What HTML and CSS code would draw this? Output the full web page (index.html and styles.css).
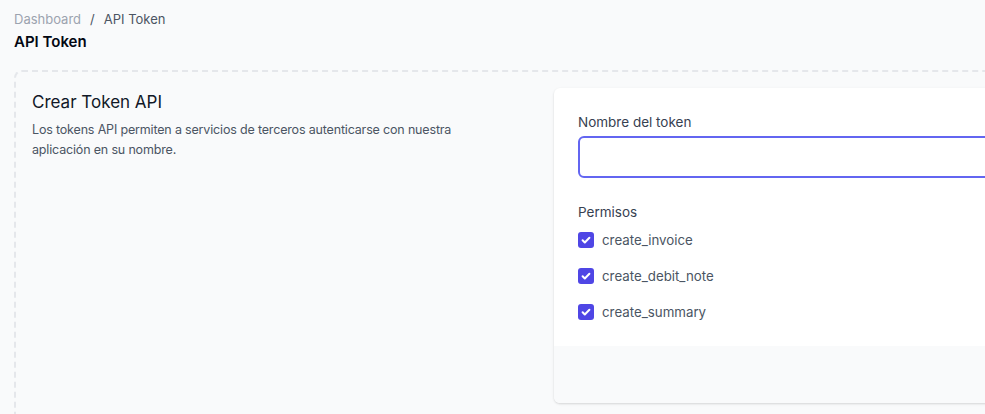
FILE: index.html
```html
<!DOCTYPE html>
<html lang="es">
<head>
<meta charset="utf-8">
<title>API Token</title>
<link rel="stylesheet" href="styles.css">
</head>
<body>
<div class="page">
  <header class="header">
    <nav class="crumbs">
      <span class="crumb-muted">Dashboard</span>
      <span class="crumb-sep">/</span>
      <span class="crumb-current">API Token</span>
    </nav>
    <h1 class="title">API Token</h1>
  </header>
  <section class="dashed">
    <div class="form-section">
      <div class="intro">
        <h2 class="intro-title">Crear Token API</h2>
        <p class="intro-text">Los tokens API permiten a servicios de terceros autenticarse con nuestra aplicación en su nombre.</p>
      </div>
      <div class="card">
        <div class="card-body">
          <label class="field-label" for="tname">Nombre del token</label>
          <input id="tname" class="text-input" type="text">
          <div class="perms">
            <div class="field-label">Permisos</div>
            <div class="perm-list">
              <label class="perm"><span class="check"><svg viewBox="0 0 16 16" width="16" height="16"><path d="M4.6 8.3l2.2 2.2 4.6-4.7" fill="none" stroke="#fff" stroke-width="2" stroke-linecap="round" stroke-linejoin="round"/></svg></span><span class="perm-text">create_invoice</span></label>
              <label class="perm"><span class="check"><svg viewBox="0 0 16 16" width="16" height="16"><path d="M4.6 8.3l2.2 2.2 4.6-4.7" fill="none" stroke="#fff" stroke-width="2" stroke-linecap="round" stroke-linejoin="round"/></svg></span><span class="perm-text">create_debit_note</span></label>
              <label class="perm"><span class="check"><svg viewBox="0 0 16 16" width="16" height="16"><path d="M4.6 8.3l2.2 2.2 4.6-4.7" fill="none" stroke="#fff" stroke-width="2" stroke-linecap="round" stroke-linejoin="round"/></svg></span><span class="perm-text">create_summary</span></label>
            </div>
          </div>
        </div>
        <div class="card-footer"></div>
      </div>
    </div>
  </section>
</div>
</body>
</html>
```
FILE: styles.css
```css
html, body {
  margin: 0;
  padding: 0;
  overflow: hidden;
  background: #f9fafb;
}
body {
  font-family: Inter, "Noto Sans", sans-serif;
  color: #111827;
}
.page {
  width: 1600px;
  padding: 0 14px;
}
.header {
  padding-top: 9px;
}
.crumbs {
  display: flex;
  gap: 9px;
  font-size: 13px;
  line-height: 20px;
}
.crumb-muted { color: #9ca3af; }
.crumb-sep { color: #4b5563; }
.crumb-current { color: #4b5563; }
.title {
  margin: 3px 0 0;
  font-size: 15px;
  line-height: 20px;
  font-weight: 600;
  color: #030712;
}
.dashed {
  margin-top: 18px;
  border: 2px dashed #e5e7eb;
  border-radius: 8px;
  padding: 16px;
  height: 400px;
}
.form-section {
  display: grid;
  grid-template-columns: 498px 1fr;
  gap: 24px;
}
.intro-title {
  margin: 0;
  font-size: 17px;
  line-height: 28px;
  font-weight: 400;
  color: #111827;
}
.intro-text {
  margin: 4px 0 0;
  font-size: 12.5px;
  letter-spacing: -0.17px;
  line-height: 20px;
  color: #4b5563;
  width: 450px;
}
.card {
  background: #fff;
  border-radius: 6px;
  box-shadow: 0 1px 3px rgba(0,0,0,0.1), 0 1px 2px rgba(0,0,0,0.06);
  overflow: hidden;
}
.card-body {
  padding: 24px;
  display: flex;
  flex-direction: column;
}
.field-label {
  font-size: 13.5px;
  line-height: 20px;
  font-weight: 400;
  color: #374151;
}
.text-input {
  margin-top: 4px;
  height: 42px;
  width: 600px;
  box-sizing: border-box;
  border: 2px solid #6366f1;
  border-radius: 6px;
  outline: none;
  background: #fff;
}
.perms {
  margin-top: 24px;
}
.perm-list {
  margin-top: 8px;
  display: flex;
  flex-direction: column;
  gap: 16px;
}
.perm {
  display: flex;
  align-items: center;
  gap: 8px;
  height: 20px;
}
.check {
  width: 16px;
  height: 16px;
  border-radius: 3px;
  background: #4f46e5;
  display: flex;
}
.perm-text {
  font-size: 13.3px;
  line-height: 20px;
  color: #4b5563;
}
.card-footer {
  height: 57px;
  background: #f9fafb;
}
```
